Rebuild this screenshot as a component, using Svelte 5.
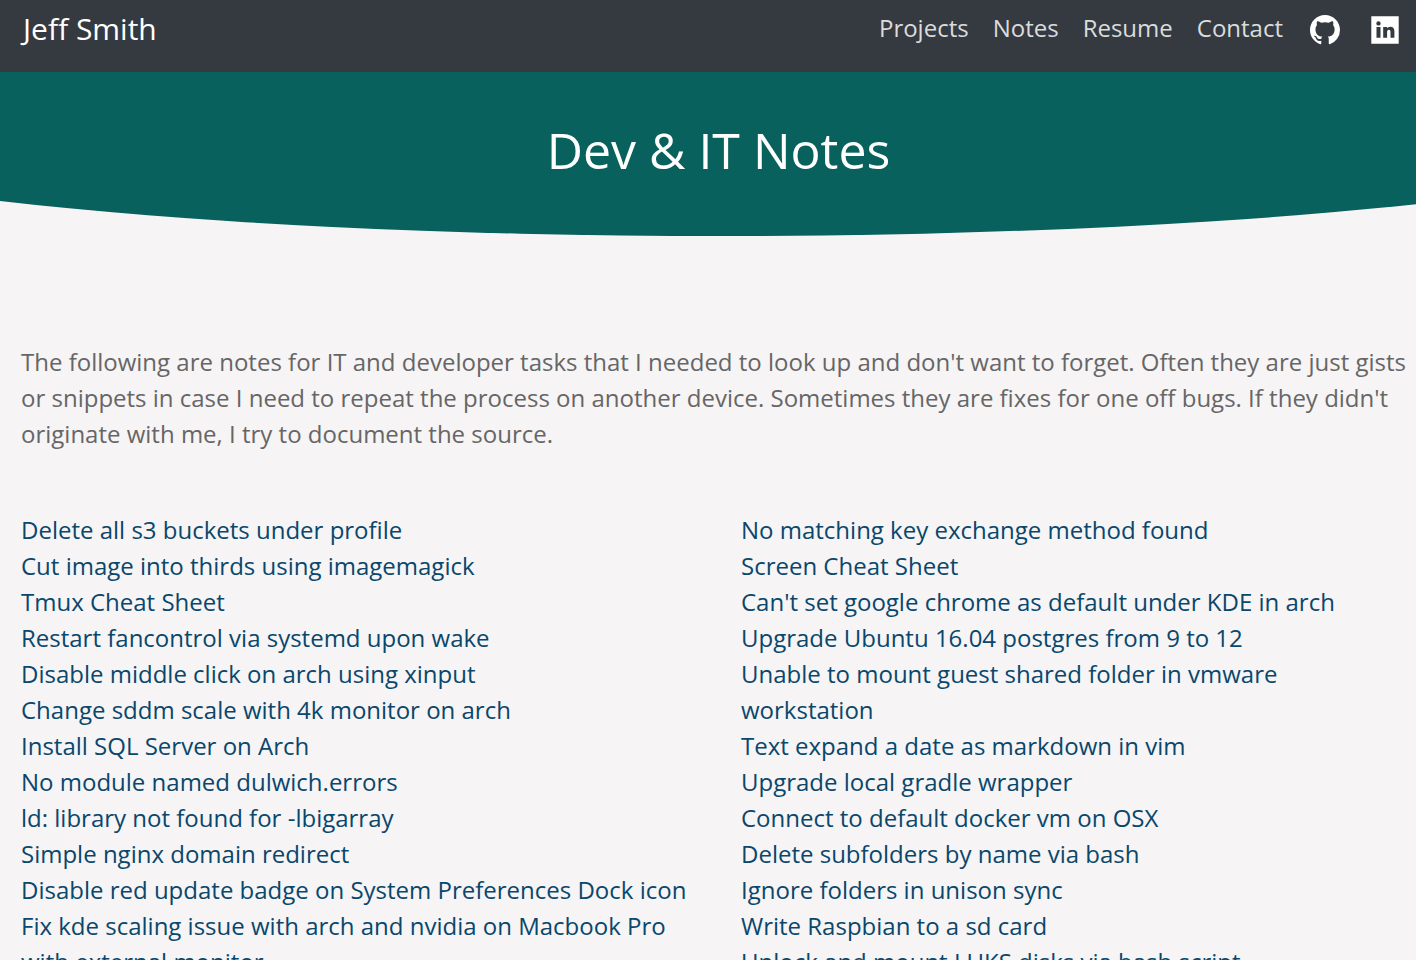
<script>
  const left = [
    'Delete all s3 buckets under profile',
    'Cut image into thirds using imagemagick',
    'Tmux Cheat Sheet',
    'Restart fancontrol via systemd upon wake',
    'Disable middle click on arch using xinput',
    'Change sddm scale with 4k monitor on arch',
    'Install SQL Server on Arch',
    'No module named dulwich.errors',
    'ld: library not found for -lbigarray',
    'Simple nginx domain redirect',
    'Disable red update badge on System Preferences Dock icon',
    'Fix kde scaling issue with arch and nvidia on Macbook Pro with external monitor'
  ];
  const right = [
    'No matching key exchange method found',
    'Screen Cheat Sheet',
    "Can't set google chrome as default under KDE in arch",
    'Upgrade Ubuntu 16.04 postgres from 9 to 12',
    'Unable to mount guest shared folder in vmware workstation',
    'Text expand a date as markdown in vim',
    'Upgrade local gradle wrapper',
    'Connect to default docker vm on OSX',
    'Delete subfolders by name via bash',
    'Ignore folders in unison sync',
    'Write Raspbian to a sd card',
    'Unlock and mount LUKS disks via bash script'
  ];
</script>

<div class="page">
  <header class="bar">
    <a class="brand" href="#home">Jeff Smith</a>
    <nav>
      <a href="#projects">Projects</a>
      <a href="#notes">Notes</a>
      <a href="#resume">Resume</a>
      <a href="#contact">Contact</a>
      <a class="icon github" href="#github" aria-label="GitHub">
        <svg viewBox="0 0 16 16" width="30" height="30" aria-hidden="true">
          <path fill="currentColor" d="M8 0C3.58 0 0 3.58 0 8c0 3.54 2.29 6.53 5.47 7.59.4.07.55-.17.55-.38 0-.19-.01-.82-.01-1.49-2.01.37-2.53-.49-2.69-.94-.09-.23-.48-.94-.82-1.13-.28-.15-.68-.52-.01-.53.63-.01 1.08.58 1.23.82.72 1.21 1.87.87 2.33.66.07-.52.28-.87.51-1.07-1.78-.2-3.64-.89-3.64-3.95 0-.87.31-1.59.82-2.15-.08-.2-.36-1.02.08-2.12 0 0 .67-.21 2.2.82.64-.18 1.32-.27 2-.27s1.36.09 2 .27c1.53-1.04 2.2-.82 2.2-.82.44 1.1.16 1.92.08 2.12.51.56.82 1.27.82 2.15 0 3.07-1.87 3.75-3.65 3.95.29.25.54.73.54 1.48 0 1.07-.01 1.93-.01 2.2 0 .21.15.46.55.38A8.01 8.01 0 0 0 16 8c0-4.42-3.58-8-8-8z" />
        </svg>
      </a>
      <a class="icon" href="#linkedin" aria-label="LinkedIn">
        <svg viewBox="0 0 28 28" width="28" height="28" aria-hidden="true">
          <path fill="currentColor" fill-rule="evenodd" d="M.3.3h27.400v27.400H.3zM5.500 11v10.700h4V11zM7.500 5.200a2.200 2.200 0 1 0 0 4.400a2.200 2.200 0 0 0 0-4.400zM12.200 11v10.700h3.900v-5.600c0-1.500.5-2.400 1.800-2.400s1.600 1.100 1.600 2.500v5.500h3.900v-6.200c0-3-1.200-4.800-4-4.800-1.600 0-2.700.8-3.300 1.800V11z" />
        </svg>
      </a>
    </nav>
  </header>

  <section class="hero">
    <h1>Dev &amp; IT Notes</h1>
  </section>

  <main>
    <p>The following are notes for IT and developer tasks that I needed to look up and don't want to forget. Often they are just gists or snippets in case I need to repeat the process on another device. Sometimes they are fixes for one off bugs. If they didn't originate with me, I try to document the source.</p>
    <div class="columns">
      {#each [left, right] as notes}
        <ul>
          {#each notes as note}
            <li><a href="#note">{note}</a></li>
          {/each}
        </ul>
      {/each}
    </div>
  </main>
</div>

<style>
  :global(html) { scrollbar-width: none; }
  :global(body) { margin: 0; background: #f6f4f5; }
  .page {
    font-family: 'Open Sans', sans-serif;
    font-size: 24px;
    line-height: 36px;
    color: #666;
  }
  a { color: inherit; text-decoration: none; }
  .bar {
    display: flex;
    justify-content: space-between;
    align-items: flex-start;
    box-sizing: border-box;
    min-height: 72px;
    padding: 10px 17px 0 23px;
    background: #353a41;
    color: #dcdcdc;
  }
  .brand { font-size: 30px; line-height: 38px; color: #fff; }
  nav { display: flex; gap: 24px; }
  .icon { display: flex; align-items: center; height: 40px; color: #fff; }
  .github { margin: 0 7px 0 3px; }
  .hero {
    display: flex;
    justify-content: center;
    box-sizing: border-box;
    min-height: 164px;
    padding: 42px 0 0 21px;
    background: #09615d;
    clip-path: ellipse(73% 123px at 51% 41px);
    color: #fff;
  }
  h1 { margin: 0; font-size: 50px; line-height: 72px; font-weight: 400; }
  main { padding: 108px 0 60px 21px; }
  p { margin: 0; padding-right: 8px; }
  .columns {
    display: grid;
    grid-template-columns: 1fr 1fr;
    gap: 45px;
    margin-top: 60px;
    color: #09476c;
  }
  ul { margin: 0; padding: 0; list-style: none; }
</style>
